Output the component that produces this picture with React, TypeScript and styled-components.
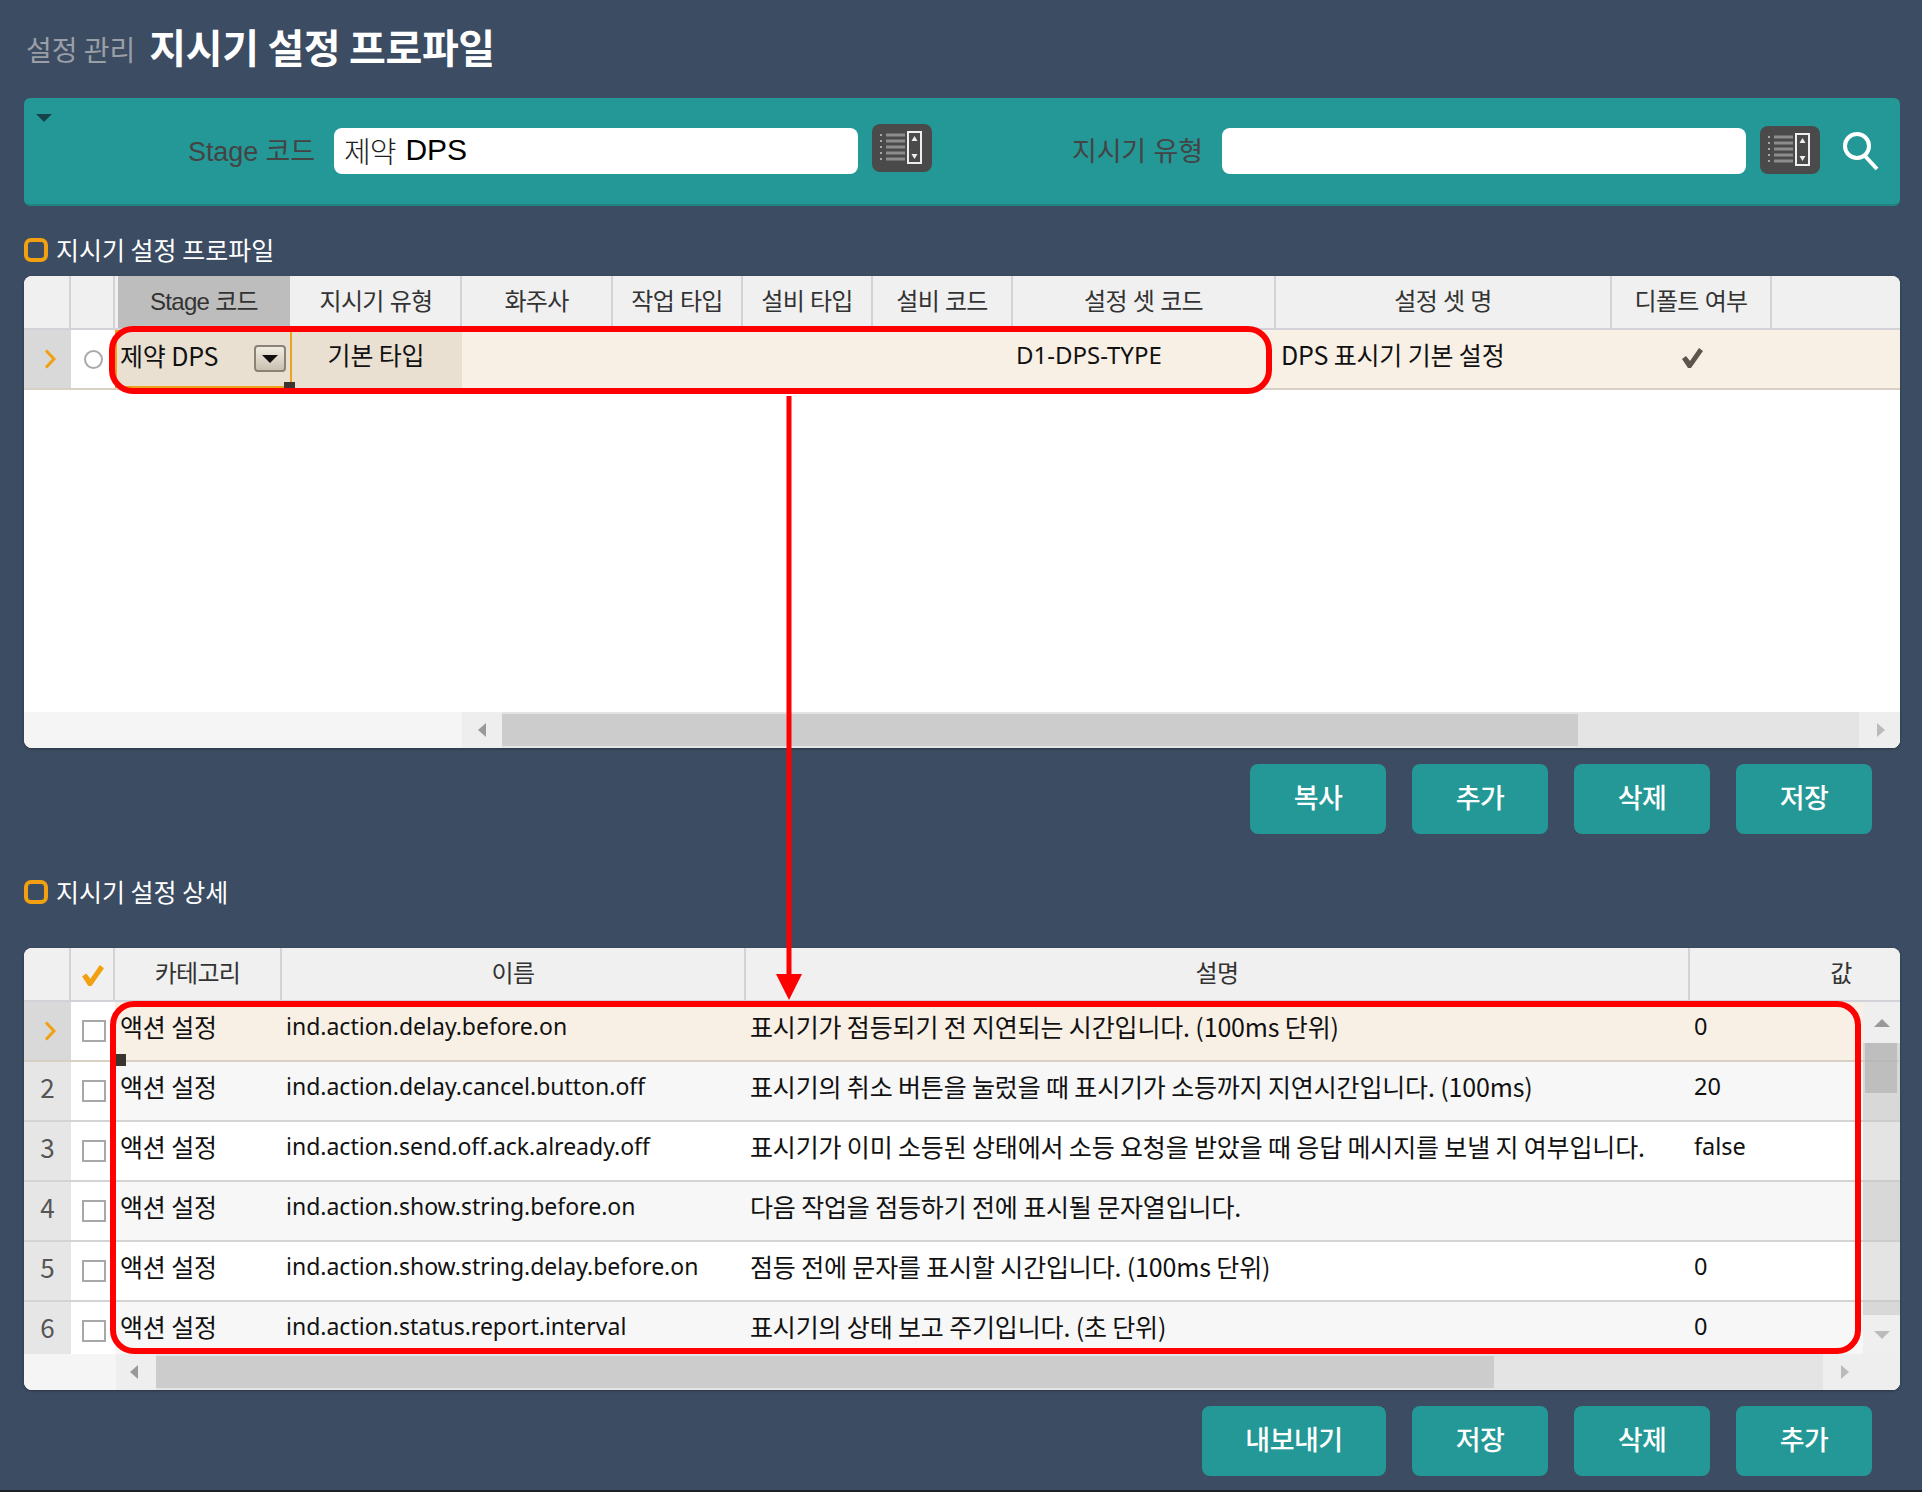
import React from 'react'
import styled, { createGlobalStyle } from 'styled-components'

const GlobalStyle = createGlobalStyle`
  html, body { margin: 0; padding: 0; background: #3c4c62; }
  * { box-sizing: border-box; }
  body { font-family: "Noto Sans CJK KR", "Noto Sans", sans-serif; }
`
const labelFont = '"Liberation Sans", "Noto Sans CJK KR", sans-serif'

const Page = styled.div`
  position: relative;
  width: 1922px;
  height: 1492px;
  padding: 0 22px 0 24px;
  overflow: hidden;
  border-bottom: 2px solid #1a2026;
`
const TitleBar = styled.div`
  height: 98px;
  display: flex;
  align-items: center;
  gap: 14px;
  padding: 0 0 6px 2px;
`
const Crumb = styled.span`
  font-size: 28px;
  color: #9a9ea6;
  padding-top: 6px;
`
const PageTitle = styled.h1`
  margin: 0;
  font-size: 40px;
  font-weight: 700;
  letter-spacing: -0.35px;
  color: #fff;
`
const SearchPanel = styled.div`
  position: relative;
  height: 108px;
  display: flex;
  align-items: center;
  padding-left: 161px;
  background: #239896;
  border-bottom: 2px solid #1f8482;
  border-radius: 6px;
`
const Collapse = styled.span`
  position: absolute;
  left: 12px;
  top: 16px;
  border-left: 8px solid transparent;
  border-right: 8px solid transparent;
  border-top: 8px solid #16434a;
`
const FieldLabel = styled.label`
  width: 130px;
  margin-right: 19px;
  padding-bottom: 4px;
  display: flex;
  justify-content: flex-end;
  font-family: ${labelFont};
  font-size: 27px;
  letter-spacing: -0.1px;
  color: #444;
  white-space: nowrap;
`
const SearchInput = styled.div`
  width: 524px;
  height: 46px;
  padding: 0 0 2px 10px;
  display: flex;
  align-items: center;
  gap: 10px;
  background: #fff;
  border-radius: 8px;
  font-family: ${labelFont};
  font-size: 30px;
  color: #000;
`
const ThinText = styled.span`
  font-weight: 300;
  font-size: 29px;
  color: #222;
  letter-spacing: -1px;
`
const ListButton = styled.button<{ $lift: number }>`
  width: 60px;
  height: 48px;
  margin: 0 0 ${p => p.$lift}px 14px;
  padding: 0;
  border: none;
  border-radius: 8px;
  background: #4a4a4a;
  display: flex;
  align-items: center;
  justify-content: center;
`
const FieldGap = styled.div`
  width: 141px;
`
const SearchIcon = styled.svg`
  margin-left: 22px;
  width: 38px;
  height: 40px;
`
const Section = styled.div<{ $below: number }>`
  height: 70px;
  display: flex;
  align-items: flex-end;
  gap: 8px;
  padding-bottom: ${p => p.$below}px;
  font-size: 25px;
  line-height: 26px;
  color: #fff;
`
const SectionText = styled.span`
  position: relative;
  top: -1px;
`
const Marker = styled.span`
  width: 24px;
  height: 24px;
  border: 4px solid #f0a010;
  border-radius: 7px;
  margin-bottom: 1px;
`
const Table = styled.div<{ $height: number }>`
  height: ${p => p.$height}px;
  display: flex;
  flex-direction: column;
  background: #fff;
  border-radius: 8px;
  overflow: hidden;
  box-shadow: 0 1px 3px rgba(0, 0, 0, 0.3);
`
const HeadRow = styled.div<{ $cols: string }>`
  height: 54px;
  flex: none;
  display: grid;
  grid-template-columns: ${p => p.$cols};
  background: #f0f0f0;
  border-bottom: 2px solid #d2d2d8;
`
const HeadCell = styled.div<{ $active?: boolean }>`
  display: flex;
  align-items: center;
  justify-content: center;
  padding-bottom: 5px;
  font-family: ${labelFont};
  font-size: 24px;
  letter-spacing: -0.7px;
  color: #333;
  white-space: nowrap;
  border-right: 2px solid #d2d2d8;
  background: ${p => (p.$active ? '#bdbdbd' : 'transparent')};
  ${p => p.$active && 'border-left: 3px solid #f0f0f0; border-right-color: #f0f0f0;'}
`
const HeadLast = styled(HeadCell)`
  border-right: none;
`
const HeadCheck = styled(HeadCell)`
  padding: 3px 0 0;
`
const Row = styled.div<{ $cols: string; $bg: string; $line: string }>`
  height: 60px;
  flex: none;
  display: grid;
  grid-template-columns: ${p => p.$cols};
  background: ${p => p.$bg};
  border-bottom: 2px solid ${p => p.$line};
`
const Cell = styled.div<{ $center?: boolean }>`
  display: flex;
  align-items: center;
  justify-content: ${p => (p.$center ? 'center' : 'flex-start')};
  padding: 0 0 10px 5px;
  font-size: 25px;
  letter-spacing: -0.15px;
  color: #111;
  white-space: nowrap;
  overflow: hidden;
`
const DescCell = styled(Cell)`
  padding-left: 4px;
`
const LatinCell = styled(Cell)`
  padding-left: 4px;
  font-family: "Noto Sans", sans-serif;
  font-size: 23px;
  letter-spacing: 0;
`
const ValueCell = styled(LatinCell)`
  font-size: 23.5px;
`
const CodeCell = styled(LatinCell)`
  padding-left: 3px;
  font-size: 24px;
`
const CheckCell = styled(Cell)`
  padding: 0 0 2px;
`
const StageCell = styled(Cell)`
  position: relative;
  background: #e9e0d2;
  border: 2px solid #eba21f;
  padding-left: 3px;
  padding-bottom: 8px;
`
const TypeCell = styled(Cell)`
  background: #e9e0d2;
  padding-left: 0;
  padding-right: 2px;
`
const RowMark = styled.div<{ $current?: boolean }>`
  display: flex;
  align-items: center;
  justify-content: center;
  background: ${p => (p.$current ? '#d9d9d9' : '#e6e6e6')};
  font-size: 26px;
  color: #555;
  padding: 0 0 ${p => (p.$current ? 0 : 9)}px ${p => (p.$current ? 5 : 0)}px;
`
const Pick = styled.div`
  display: flex;
  align-items: center;
  justify-content: center;
  background: #fff;
  padding: 0 0 0 1px;
`
const Radio = styled.span`
  width: 19px;
  height: 19px;
  border: 2px solid #aaa;
  border-radius: 50%;
`
const Check = styled.span`
  width: 24px;
  height: 22px;
  border: 2px solid #a8a8a8;
  background: #fff;
`
const DropButton = styled.span`
  position: absolute;
  right: 4px;
  top: 13px;
  width: 32px;
  height: 27px;
  border: 2px solid #8a8276;
  border-radius: 4px;
  background: linear-gradient(#f1ece2, #c9c0b0);
  display: flex;
  align-items: center;
  justify-content: center;
  &::after {
    content: '';
    border-left: 8px solid transparent;
    border-right: 8px solid transparent;
    border-top: 8px solid #111;
  }
`
const Handle = styled.span<{ $left: number; $top: number; $h: number }>`
  position: absolute;
  left: ${p => p.$left}px;
  top: ${p => p.$top}px;
  width: 11px;
  height: ${p => p.$h}px;
  background: #3a352e;
`
const Blank = styled.div`
  flex: 1;
`
const HBar = styled.div`
  height: 36px;
  flex: none;
  display: flex;
  background: #f5f5f5;
`
const HLead = styled.div<{ $w: number }>`
  width: ${p => p.$w}px;
`
const HArrowCell = styled.div<{ $w: number; $pad: number }>`
  width: ${p => p.$w}px;
  padding-left: ${p => p.$pad}px;
  display: flex;
  align-items: center;
  background: #eeeeee;
`
const HTrack = styled.div`
  flex: 1;
  padding: 2px 0;
  background: #e4e4e4;
`
const HThumb = styled.div<{ $w: number }>`
  width: ${p => p.$w}px;
  height: 100%;
  background: #cccccc;
`
const Tri = styled.span<{ $dir: 'left' | 'right' | 'up' | 'down'; $tone: string }>`
  width: 0;
  height: 0;
  ${p =>
    p.$dir === 'left'
      ? `border-top: 7px solid transparent; border-bottom: 7px solid transparent; border-right: 8px solid ${p.$tone};`
      : p.$dir === 'right'
        ? `border-top: 7px solid transparent; border-bottom: 7px solid transparent; border-left: 8px solid ${p.$tone};`
        : p.$dir === 'up'
          ? `border-left: 8px solid transparent; border-right: 8px solid transparent; border-bottom: 8px solid ${p.$tone};`
          : `border-left: 8px solid transparent; border-right: 8px solid transparent; border-top: 8px solid ${p.$tone};`}
`
const GridBody = styled.div`
  flex: 1;
  min-height: 0;
  display: flex;
`
const Rows = styled.div`
  flex: 1;
  min-width: 0;
  display: flex;
  flex-direction: column;
  overflow: hidden;
`
const VBar = styled.div`
  position: relative;
  width: 37px;
  flex: none;
  display: flex;
  flex-direction: column;
  background: #efefef;
`
const VArrowCell = styled.div<{ $h: number }>`
  height: ${p => p.$h}px;
  flex: none;
  display: flex;
  align-items: center;
  justify-content: center;
`
const VSeg = styled.div<{ $h: number; $dark: boolean; $line: boolean }>`
  height: ${p => p.$h}px;
  flex: none;
  background: ${p => (p.$dark ? '#d8d8d8' : '#e4e4e4')};
  border-bottom: ${p => (p.$line ? '2px solid #cdcdcd' : 'none')};
`
const VThumb = styled.div`
  position: absolute;
  left: 2px;
  top: 41px;
  width: 32px;
  height: 50px;
  background: rgba(170, 170, 170, 0.55);
`
const ButtonRow = styled.div<{ $height: number }>`
  height: ${p => p.$height}px;
  display: flex;
  justify-content: flex-end;
  gap: 26px;
  padding: 16px 28px 0 0;
`
const ActionButton = styled.button<{ $w: number }>`
  width: ${p => p.$w}px;
  height: 70px;
  padding: 0 0 5px;
  border: none;
  border-radius: 8px;
  background: #239896;
  color: #fff;
  font-family: inherit;
  font-size: 27px;
  font-weight: 500;
  letter-spacing: -0.5px;
`
const RedBox = styled.div<{ $l: number; $t: number; $w: number; $h: number }>`
  position: absolute;
  left: ${p => p.$l}px;
  top: ${p => p.$t}px;
  width: ${p => p.$w}px;
  height: ${p => p.$h}px;
  border: 6px solid #ff0000;
  border-radius: 24px;
  pointer-events: none;
`
const ArrowMark = styled.svg`
  position: absolute;
  left: 775px;
  top: 396px;
`

const ListIcon = () => (
  <svg width="46" height="34" viewBox="0 0 46 34">
    {[3, 9, 15, 21, 27].map(y => (
      <g key={y}>
        <rect x="1" y={y} width="2" height="2" fill="#a8a8a8" />
        <rect x="7" y={y - 0.5} width="19" height="3" fill="#8c8c8c" />
      </g>
    ))}
    <rect x="29" y="1" width="13" height="31" fill="#4a4a4a" stroke="#eee" strokeWidth="2" />
    <path d="M35.5 5 L38.5 10 L32.5 10 Z" fill="#eee" />
    <path d="M35.5 28 L38.5 23 L32.5 23 Z" fill="#eee" />
  </svg>
)
const Chevron = () => (
  <svg width="12" height="20" viewBox="0 0 12 20">
    <path d="M2 1.5 L10 10 L2 18.5" fill="none" stroke="#f0a010" strokeWidth="3" />
  </svg>
)
const CheckMark = ({ tone, size }: { tone: string; size: number }) => (
  <svg width={size} height={size} viewBox="0 0 24 24">
    <path d="M2 13 L6 10 L10 15 L19 2 L23 5 L11 22 L8 22 Z" fill={tone} />
  </svg>
)

const profileCols = '47px 44px 177px 170px 151px 130px 130px 140px 263px 336px 160px 1fr'
const detailCols = '47px 44px 167px 464px 944px 302px'
const detailRowCols = '47px 44px 167px 464px 944px 1fr'

const profileHeads = ['지시기 유형', '화주사', '작업 타입', '설비 타입', '설비 코드', '설정 셋 코드', '설정 셋 명', '디폴트 여부']

const details = [
  { cat: '액션 설정', name: 'ind.action.delay.before.on', desc: '표시기가 점등되기 전 지연되는 시간입니다. (100ms 단위)', value: '0' },
  { cat: '액션 설정', name: 'ind.action.delay.cancel.button.off', desc: '표시기의 취소 버튼을 눌렀을 때 표시기가 소등까지 지연시간입니다. (100ms)', value: '20' },
  { cat: '액션 설정', name: 'ind.action.send.off.ack.already.off', desc: '표시기가 이미 소등된 상태에서 소등 요청을 받았을 때 응답 메시지를 보낼 지 여부입니다.', value: 'false' },
  { cat: '액션 설정', name: 'ind.action.show.string.before.on', desc: '다음 작업을 점등하기 전에 표시될 문자열입니다.', value: '' },
  { cat: '액션 설정', name: 'ind.action.show.string.delay.before.on', desc: '점등 전에 문자를 표시할 시간입니다. (100ms 단위)', value: '0' },
  { cat: '액션 설정', name: 'ind.action.status.report.interval', desc: '표시기의 상태 보고 주기입니다. (초 단위)', value: '0' },
]

const rowBg = (i: number) => (i === 0 ? '#f9f0e5' : i % 2 === 1 ? '#f7f7f7' : '#ffffff')

const App = () => {
  return (
    <Page>
      <GlobalStyle />
      <TitleBar>
        <Crumb>설정 관리</Crumb>
        <PageTitle>지시기 설정 프로파일</PageTitle>
      </TitleBar>

      <SearchPanel>
        <Collapse />
        <FieldLabel>Stage 코드</FieldLabel>
        <SearchInput><ThinText>제약</ThinText>DPS</SearchInput>
        <ListButton $lift={6}><ListIcon /></ListButton>
        <FieldGap />
        <FieldLabel>지시기 유형</FieldLabel>
        <SearchInput />
        <ListButton $lift={2}><ListIcon /></ListButton>
        <SearchIcon viewBox="0 0 38 40">
          <circle cx="15" cy="15" r="12" fill="none" stroke="#fff" strokeWidth="4" />
          <path d="M23 25 L35 38" stroke="#fff" strokeWidth="4" fill="none" />
        </SearchIcon>
      </SearchPanel>

      <Section $below={13}><Marker /><SectionText>지시기 설정 프로파일</SectionText></Section>
      <Table $height={472}>
        <HeadRow $cols={profileCols}>
          <HeadCell />
          <HeadCell />
          <HeadCell $active>Stage 코드</HeadCell>
          {profileHeads.map(h => <HeadCell key={h}>{h}</HeadCell>)}
          <HeadLast />
        </HeadRow>
        <Row $cols={profileCols} $bg="#f9f0e5" $line="#d8cfc5">
          <RowMark $current><Chevron /></RowMark>
          <Pick><Radio /></Pick>
          <StageCell>제약 DPS<DropButton /></StageCell>
          <TypeCell $center>기본 타입</TypeCell>
          <Cell /><Cell /><Cell /><Cell />
          <CodeCell>D1-DPS-TYPE</CodeCell>
          <Cell>DPS 표시기 기본 설정</Cell>
          <CheckCell $center><CheckMark tone="#5d564e" size={24} /></CheckCell>
          <Cell />
        </Row>
        <Blank />
        <HBar>
          <HLead $w={438} />
          <HArrowCell $w={40} $pad={16}><Tri $dir="left" $tone="#999" /></HArrowCell>
          <HTrack><HThumb $w={1076} /></HTrack>
          <HArrowCell $w={41} $pad={18}><Tri $dir="right" $tone="#bbb" /></HArrowCell>
        </HBar>
      </Table>
      <ButtonRow $height={130}>
        <ActionButton $w={136}>복사</ActionButton>
        <ActionButton $w={136}>추가</ActionButton>
        <ActionButton $w={136}>삭제</ActionButton>
        <ActionButton $w={136}>저장</ActionButton>
      </ButtonRow>

      <Section $below={43}><Marker /><SectionText>지시기 설정 상세</SectionText></Section>
      <Table $height={442}>
        <HeadRow $cols={detailCols}>
          <HeadCell />
          <HeadCheck><CheckMark tone="#f0a010" size={25} /></HeadCheck>
          <HeadCell>카테고리</HeadCell>
          <HeadCell>이름</HeadCell>
          <HeadCell>설명</HeadCell>
          <HeadLast>값</HeadLast>
        </HeadRow>
        <GridBody>
          <Rows>
            {details.map((d, i) => (
              <Row
                key={d.name}
                $cols={detailRowCols}
                $bg={rowBg(i)}
                $line={i === 0 ? '#d8cfc5' : '#d4d4d4'}
              >
                <RowMark $current={i === 0}>{i === 0 ? <Chevron /> : i + 1}</RowMark>
                <Pick><Check /></Pick>
                <Cell>{d.cat}</Cell>
                <LatinCell>{d.name}</LatinCell>
                <DescCell>{d.desc}</DescCell>
                <ValueCell>{d.value}</ValueCell>
              </Row>
            ))}
          </Rows>
          <VBar>
            <VArrowCell $h={41}><Tri $dir="up" $tone="#999" /></VArrowCell>
            {[19, 60, 60, 60, 60, 13].map((h, i) => (
              <VSeg key={i} $h={h} $dark={i % 2 === 1 || i === 0 || i === 5} $line={i < 5} />
            ))}
            <VThumb />
            <VArrowCell $h={40}><Tri $dir="down" $tone="#bbb" /></VArrowCell>
          </VBar>
        </GridBody>
        <HBar>
          <HLead $w={92} />
          <HArrowCell $w={40} $pad={14}><Tri $dir="left" $tone="#999" /></HArrowCell>
          <HTrack><HThumb $w={1338} /></HTrack>
          <HArrowCell $w={77} $pad={18}><Tri $dir="right" $tone="#bbb" /></HArrowCell>
        </HBar>
      </Table>
      <ButtonRow $height={86}>
        <ActionButton $w={184}>내보내기</ActionButton>
        <ActionButton $w={136}>저장</ActionButton>
        <ActionButton $w={136}>삭제</ActionButton>
        <ActionButton $w={136}>추가</ActionButton>
      </ButtonRow>

      <Handle $left={284} $top={382} $h={8} />
      <Handle $left={115} $top={1054} $h={12} />
      <RedBox $l={109} $t={326} $w={1163} $h={68} />
      <RedBox $l={110} $t={1001} $w={1751} $h={353} />
      <ArrowMark width="28" height="606" viewBox="0 0 28 606">
        <rect x="11.5" y="0" width="5" height="580" fill="#ff0000" />
        <path d="M1 578 L27 578 L14 604 Z" fill="#ff0000" />
      </ArrowMark>
    </Page>
  )
}

export default App
